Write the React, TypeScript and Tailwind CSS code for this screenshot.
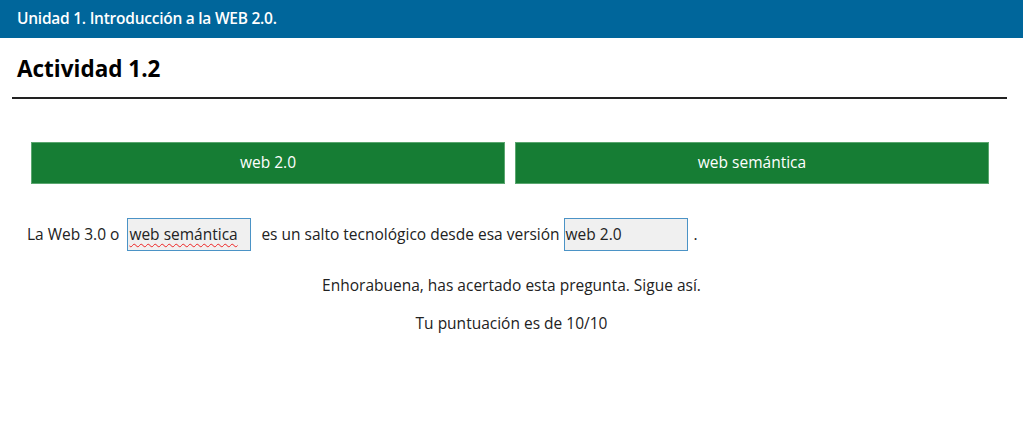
import React from 'react';

const App = () => {
  return (
    <div className="bg-white min-h-screen text-[#222] font-['Open_Sans',sans-serif]">
      {/* Header */}
      <div className="bg-[#00669b] h-[38px] flex items-center px-[17px]">
        <span className="text-white font-semibold text-[15.5px] tracking-[-0.25px]">Unidad 1. Introducción a la WEB 2.0.</span>
      </div>

      {/* Title */}
      <div className="ml-[12px] mr-[16px] border-b-2 border-[#222] h-[61px] flex items-center px-[5px] pt-[2px]">
        <h1 className="text-[22.5px] font-bold text-black">Actividad 1.2</h1>
      </div>

      {/* Options */}
      <div className="flex gap-[10px] pl-[31px] pr-[34px] mt-[43px]">
        <button className="flex-1 h-[42px] bg-[#167d34] border border-[#5aa66f] text-white text-[15.5px]">web 2.0</button>
        <button className="flex-1 h-[42px] bg-[#167d34] border border-[#5aa66f] text-white text-[15.5px]">web semántica</button>
      </div>

      {/* Sentence */}
      <div className="flex items-center px-[27px] mt-[34px] text-[15.5px] text-[#222]">
        <span>La Web 3.0 o</span>
        <div className="ml-[8px] w-[124px] h-[33px] bg-[#f0f0f0] border border-[#4b93c6] flex items-center px-[1px]">
          <span className="underline decoration-wavy decoration-[#e22] decoration-1 underline-offset-[3px]">web semántica</span>
        </div>
        <span className="ml-[10px]">es un salto tecnológico desde esa versión</span>
        <div className="ml-[4px] w-[124px] h-[33px] bg-[#f0f0f0] border border-[#4b93c6] flex items-center px-[1px]">
          <span>web 2.0</span>
        </div>
        <span className="ml-[6px]">.</span>
      </div>

      {/* Feedback */}
      <div className="text-center text-[15.5px] text-[#222] mt-[23px]">
        <p>Enhorabuena, has acertado esta pregunta. Sigue así.</p>
        <p className="mt-[15px]">Tu puntuación es de 10/10</p>
      </div>
    </div>
  );
};

export default App;
